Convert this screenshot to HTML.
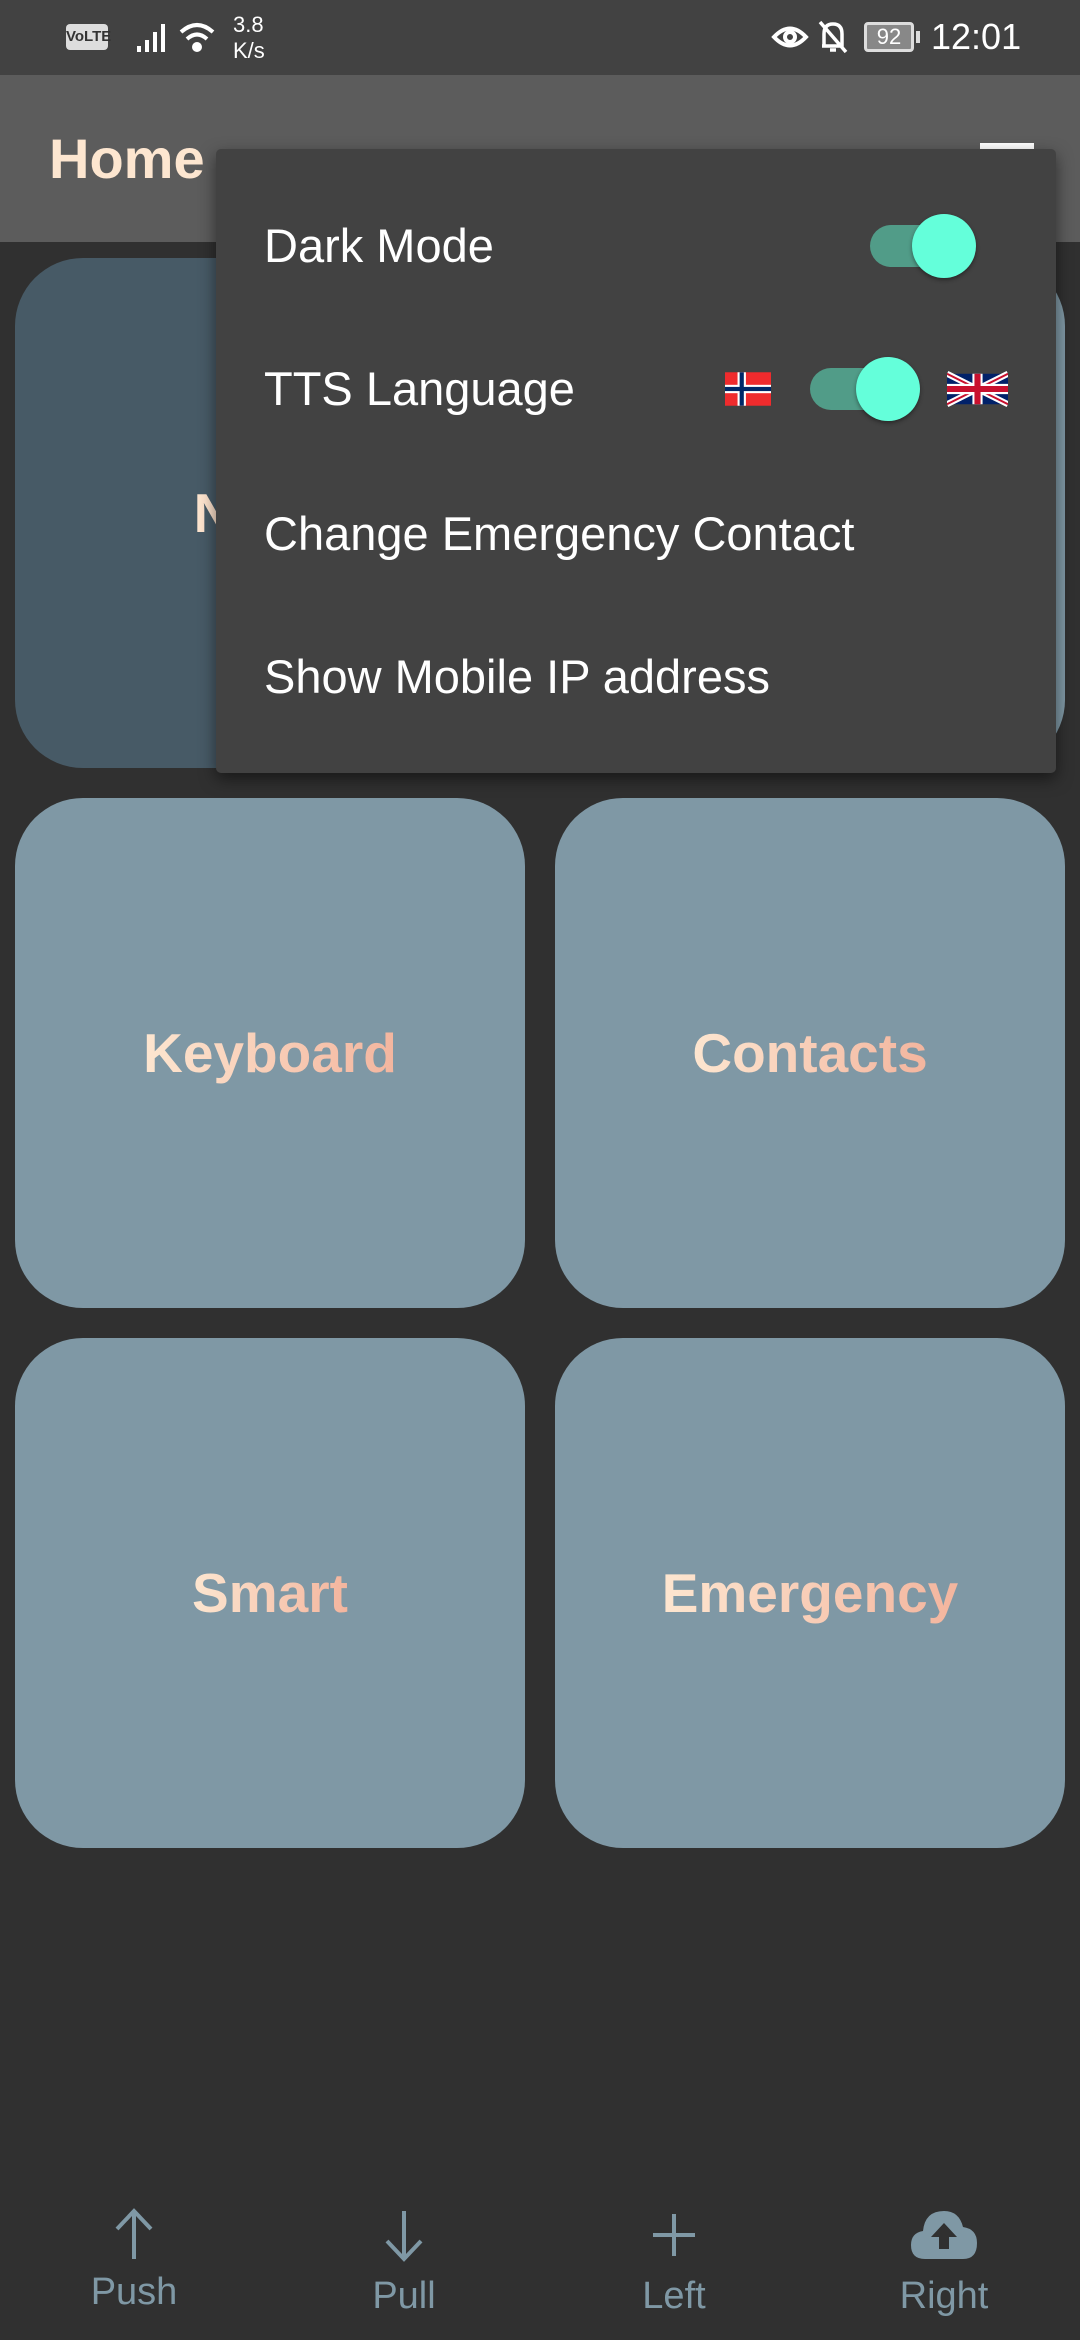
<!DOCTYPE html>
<html><head><meta charset="utf-8"><style>
*{margin:0;padding:0;box-sizing:border-box}
body{width:1080px;height:2340px;background:#303030;position:relative;overflow:hidden;font-family:"Liberation Sans",Roboto,sans-serif}
.abs{position:absolute}
.status{left:0;top:0;width:1080px;height:75px;background:#424242;color:#fff}
.appbar{left:0;top:75px;width:1080px;height:167px;background:#5c5c5c}
.home{left:49px;top:126px;font-size:56px;font-weight:bold;color:#fde6d0}
.card{width:510px;height:510px;border-radius:68px;background:#7f98a5;display:flex;align-items:center;justify-content:center}
.card span{font-size:55px;font-weight:bold;background:linear-gradient(90deg,#fde6d0,#f3b59e);-webkit-background-clip:text;background-clip:text;color:transparent}
.menu{left:216px;top:149px;width:840px;height:624px;background:#424242;border-radius:5px;box-shadow:0 6px 16px rgba(0,0,0,.5)}
.item{left:48px;font-size:47px;color:#fff;line-height:60px}
.track{width:92px;height:42px;border-radius:21px;background:#519c88}
.thumb{width:64px;height:64px;border-radius:50%;background:#64ffda;box-shadow:0 2px 4px rgba(0,0,0,.4)}
.nav{top:2205px;width:200px;text-align:center;color:#7f98a5}
.nav svg{display:block;margin:0 auto}
.nav div{font-size:38px;margin-top:10px}
</style></head><body>
<div class="abs status">
  <div class="abs" style="left:66px;top:24px;width:42px;height:26px;background:#ddd;border-radius:4px;color:#333;font-size:15px;font-weight:bold;text-align:center;line-height:26px">VoLTE</div>
  <svg class="abs" style="left:135px;top:22px" width="34" height="32"><rect x="2" y="24" width="4" height="6" fill="#fff"/><rect x="10" y="18" width="4" height="12" fill="#fff"/><rect x="18" y="10" width="4" height="20" fill="#fff"/><rect x="26" y="2" width="4" height="28" fill="#fff"/></svg>
  <svg class="abs" style="left:178px;top:20px" width="40" height="34" fill="none" stroke="#fff" stroke-width="4"><path d="M3 12 Q19 -2 35 12"/><path d="M9 19 Q19 10 29 19"/><circle cx="19" cy="27" r="3" fill="#fff"/></svg>
  <div class="abs" style="left:233px;top:12px;font-size:22px;line-height:26px">3.8<br>K/s</div>
  <svg class="abs" style="left:771px;top:20px" width="38" height="34" fill="none" stroke="#fff" stroke-width="4"><path d="M3 17 Q19 0 35 17 Q19 34 3 17Z"/><circle cx="19" cy="17" r="5"/></svg>
  <svg class="abs" style="left:816px;top:18px" width="34" height="38" fill="none" stroke="#fff" stroke-width="3.5"><path d="M8 28 V16 Q8 6 17 6 Q26 6 26 16 V28 H6 M14 32 H20 M4 4 L30 34"/></svg>
  <div class="abs" style="left:864px;top:22px;width:50px;height:30px;border:3px solid #ddd;border-radius:4px;font-size:22px;text-align:center;line-height:24px;background:#888">92</div>
  <div class="abs" style="left:916px;top:31px;width:4px;height:12px;background:#ddd"></div>
  <div class="abs" style="left:931px;top:16px;font-size:36px">12:01</div>
</div>
<div class="abs appbar"></div>
<div class="abs home">Home</div>
<div class="abs" style="left:980px;top:143px;width:54px;height:6px;background:#fff"></div>

<div class="abs card" style="left:15px;top:258px;background:#475a66"><span>Notes</span></div>
<div class="abs card" style="left:555px;top:258px"><span>Speak</span></div>
<div class="abs card" style="left:15px;top:798px"><span>Keyboard</span></div>
<div class="abs card" style="left:555px;top:798px"><span>Contacts</span></div>
<div class="abs card" style="left:15px;top:1338px"><span>Smart</span></div>
<div class="abs card" style="left:555px;top:1338px"><span>Emergency</span></div>

<div class="abs menu">
  <div class="abs item" style="top:67px">Dark Mode</div>
  <div class="abs track" style="left:654px;top:76px"></div>
  <div class="abs thumb" style="left:696px;top:65px"></div>
  <div class="abs item" style="top:210px">TTS Language</div>
  <svg class="abs" style="left:509px;top:222px" width="46" height="36" viewBox="0 0 22 16"><rect width="22" height="16" fill="#ef2b2d"/><rect x="6" width="4" height="16" fill="#fff"/><rect y="6" width="22" height="4" fill="#fff"/><rect x="7" width="2" height="16" fill="#002868"/><rect y="7" width="22" height="2" fill="#002868"/></svg>
  <div class="abs track" style="left:594px;top:219px"></div>
  <div class="abs thumb" style="left:640px;top:208px"></div>
  <svg class="abs" style="left:731px;top:222px" width="61" height="36" viewBox="0 0 60 30"><rect width="60" height="30" fill="#012169"/><path d="M0 0L60 30M60 0L0 30" stroke="#fff" stroke-width="6"/><path d="M0 0L60 30M60 0L0 30" stroke="#c8102e" stroke-width="2"/><path d="M30 0V30M0 15H60" stroke="#fff" stroke-width="10"/><path d="M30 0V30M0 15H60" stroke="#c8102e" stroke-width="6"/></svg>
  <div class="abs item" style="top:355px">Change Emergency Contact</div>
  <div class="abs item" style="top:498px">Show Mobile IP address</div>
</div>

<div class="abs nav" style="left:34px">
  <svg width="60" height="60" fill="none" stroke="#7f98a5" stroke-width="4"><path d="M30 54V8M13 24L30 6L47 24"/></svg><div style="margin-top:6px">Push</div></div>
<div class="abs nav" style="left:304px">
  <svg width="60" height="60" fill="none" stroke="#7f98a5" stroke-width="4"><path d="M30 6V52M13 36L30 54L47 36"/></svg><div>Pull</div></div>
<div class="abs nav" style="left:574px">
  <svg width="60" height="60" fill="none" stroke="#7f98a5" stroke-width="4"><path d="M30 9V51M9 30H51"/></svg><div>Left</div></div>
<div class="abs nav" style="left:844px">
  <svg width="74" height="60" viewBox="0 0 74 60"><path d="M18 54 Q4 54 4 40 Q4 28 16 26 Q18 6 37 6 Q52 6 56 22 Q70 24 70 38 Q70 54 56 54Z" fill="#7f98a5"/><path d="M37 18L24 32H32V44H42V32H50Z" fill="#303030"/></svg><div>Right</div></div>
</body></html>
